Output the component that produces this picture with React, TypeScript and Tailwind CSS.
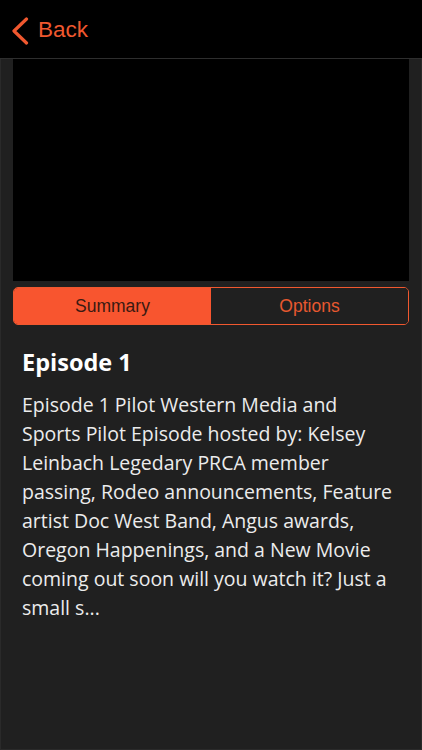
export default function App() {
  return (
    <div className="w-[422px] h-[750px] bg-[#202020] flex flex-col overflow-hidden" style={{ fontFamily: '"Open Sans", sans-serif' }}>
      <div className="h-[59px] bg-black border-b border-[#2e2e2e] flex items-center shrink-0">
        <div className="flex items-center pl-[11px] pt-[3px] gap-[9px] text-[#f0582f]">
          <svg width="18" height="28" viewBox="0 0 18 28" fill="none">
            <path d="M15.5 2 L3 14 L15.5 26" stroke="#f0582f" strokeWidth="3.2" strokeLinecap="round" strokeLinejoin="round" />
          </svg>
          <span className="text-[22.5px] leading-none" style={{ fontFamily: '"Liberation Sans", Arial, sans-serif' }}>Back</span>
        </div>
      </div>
      <div className="flex-1 flex flex-col border-x border-b border-[#2a2a2a]">
        <div className="mx-[12px] h-[222px] bg-black" />
        <div className="mx-[12px] mt-[6px] h-[38px] flex rounded-[5px] border border-[#f0582f] overflow-hidden" style={{ fontFamily: '"Liberation Sans", Arial, sans-serif' }}>
          <div className="w-1/2 bg-[#f8552f] flex items-center justify-center text-[17.5px] pt-[1px] text-[#3a1a12]">Summary</div>
          <div className="w-1/2 bg-[#202020] flex items-center justify-center text-[17.5px] pt-[1px] text-[#e8582f]">Options</div>
        </div>
        <div className="px-[21px] pt-[21px]">
          <h1 className="text-[23.5px] font-bold text-white leading-[32px]">Episode 1</h1>
          <p className="mt-[12px] text-[19.5px] leading-[29px] text-[#ececec]">
            Episode 1 Pilot Western Media and Sports Pilot Episode hosted by: Kelsey Leinbach Legedary PRCA member passing, Rodeo announcements, Feature artist Doc West Band, Angus awards, Oregon Happenings, and a New Movie coming out soon will you watch it? Just a small s...
          </p>
        </div>
      </div>
    </div>
  );
}
